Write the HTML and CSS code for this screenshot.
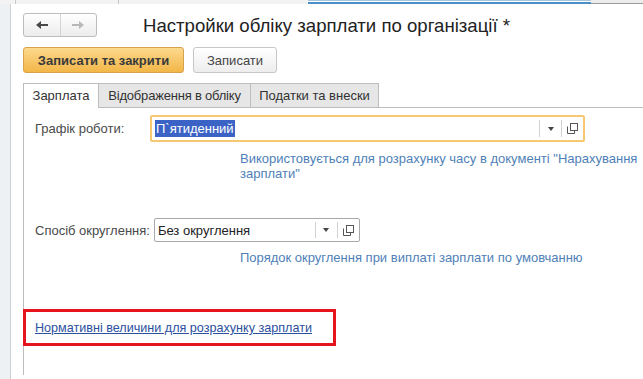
FILE: index.html
```html
<!DOCTYPE html>
<html lang="uk">
<head>
  <meta charset="UTF-8" />
  <meta name="viewport" content="width=device-width, initial-scale=1.0" />
  <title>Настройки обліку зарплати по організації</title>
  <link rel="stylesheet" href="styles.css">
</head>
<body>
  <div class="topstrip">
    <div class="seg seg-a"></div>
    <div class="seg seg-b"></div>
    <div class="seg seg-c"></div>
    <div class="seg seg-active"></div>
    <div class="seg seg-rest"></div>
  </div>

  <div class="page">
    <div class="sidebar"></div>

    <div class="main">
      <div class="title-row">
        <div class="nav">
          <button class="nav-btn">
            <svg width="14" height="10" viewBox="0 0 14 10"><path d="M1 5 L6 1 L6 4 L13 4 L13 6 L6 6 L6 9 Z" fill="#4a4a4a"/></svg>
          </button>
          <button class="nav-btn">
            <svg width="14" height="10" viewBox="0 0 14 10"><path d="M13 5 L8 1 L8 4 L1 4 L1 6 L8 6 L8 9 Z" fill="#b8b8b8"/></svg>
          </button>
        </div>
        <h1>Настройки обліку зарплати по організації *</h1>
      </div>

      <div class="actions">
        <button class="btn btn-main">Записати та закрити</button>
        <button class="btn">Записати</button>
      </div>

      <div class="tabs">
        <div class="tab active">Зарплата</div>
        <div class="tab">Відображення в обліку</div>
        <div class="tab">Податки та внески</div>
        <div class="tab-line"></div>
      </div>

      <div class="panel">
        <div class="field-row">
          <label class="label label-wide">Графік роботи:</label>
          <div class="input input-focus input-long">
            <div class="input-text"><span class="selected">П`ятиденний</span></div>
            <div class="input-btn">
              <svg width="6" height="4" viewBox="0 0 6 4"><path d="M0 0 L6 0 L3 4 Z" fill="#444"/></svg>
            </div>
            <div class="input-btn">
              <svg width="11" height="11" viewBox="0 0 11 11"><rect x="3.5" y="0.5" width="7" height="7" fill="none" stroke="#555"/><path d="M0.5 3.5 V10.5 H7.5 V8" fill="none" stroke="#555"/></svg>
            </div>
          </div>
        </div>
        <p class="hint hint-first">Використовується для розрахунку часу в документі "Нарахування<br>зарплати"</p>

        <div class="field-row field-second">
          <label class="label">Спосіб округлення:</label>
          <div class="input input-short">
            <div class="input-text">Без округлення</div>
            <div class="input-btn">
              <svg width="6" height="4" viewBox="0 0 6 4"><path d="M0 0 L6 0 L3 4 Z" fill="#444"/></svg>
            </div>
            <div class="input-btn">
              <svg width="11" height="11" viewBox="0 0 11 11"><rect x="3.5" y="0.5" width="7" height="7" fill="none" stroke="#555"/><path d="M0.5 3.5 V10.5 H7.5 V8" fill="none" stroke="#555"/></svg>
            </div>
          </div>
        </div>
        <p class="hint">Порядок округлення при виплаті зарплати по умовчанню</p>

        <div class="highlight">
          <a href="#" class="link">Нормативні величини для розрахунку зарплати</a>
        </div>
      </div>
    </div>
  </div>
</body>
</html>
```

FILE: styles.css
```css
body {
  font-family: "Liberation Sans", Arial, sans-serif;
  background-color: #ffffff;
  color: #333333;
  margin: 0;
  padding: 0;
  height: 379px;
  overflow: hidden;
}
.topstrip {
  display: flex;
  height: 4px;
  background-color: #f3f3f3;
}
.seg {
  height: 4px;
  box-sizing: border-box;
}
.seg-a {
  width: 16px;
  border-right: 1px solid #c8c8c8;
}
.seg-b {
  width: 103px;
  border-right: 1px solid #c8c8c8;
}
.seg-c {
  width: 189px;
}
.seg-active {
  width: 283px;
  background-color: #ffffff;
  border-top: 1px solid #a7c6df;
  border-bottom: 2px solid #4a8fc7;
}
.seg-rest {
  flex: 1;
  background-color: #ececec;
  border-bottom: 1px solid #9a9a9a;
}
.page {
  display: flex;
  height: 375px;
}
.sidebar {
  width: 10px;
  background-color: #eef1f4;
  border-right: 1px solid #cfcfcf;
}
.main {
  flex: 1;
  padding-left: 12px;
}
.title-row {
  display: flex;
  align-items: center;
  margin-top: 9px;
  height: 24px;
}
.nav {
  display: flex;
  width: 74px;
  height: 24px;
  box-sizing: border-box;
  border: 1px solid #bdbdbd;
  border-radius: 3px;
  background: linear-gradient(#ffffff, #ececec);
}
.nav-btn {
  flex: 1;
  border: none;
  background: none;
  padding: 0;
  display: flex;
  align-items: center;
  justify-content: center;
}
.nav-btn + .nav-btn {
  border-left: 1px solid #d4d4d4;
}
h1 {
  margin: 0 0 0 46px;
  font-size: 18.6px;
  font-weight: normal;
  color: #222222;
  line-height: 24px;
  padding-top: 2px;
}
.actions {
  display: flex;
  gap: 9px;
  margin-top: 10px;
}
.btn {
  height: 26px;
  box-sizing: border-box;
  padding: 0 13px;
  font-family: "Liberation Sans", Arial, sans-serif;
  font-size: 13px;
  color: #444444;
  border: 1px solid #c6c6c6;
  border-radius: 3px;
  background: linear-gradient(#ffffff, #ededed);
}
.btn-main {
  width: 161px;
  padding: 0;
  font-weight: bold;
  color: #3a3a3a;
  border-color: #d6a24a;
  background: linear-gradient(#fcd98d, #f2b648);
}
.tabs {
  display: flex;
  align-items: flex-end;
  margin-top: 10px;
  height: 25px;
}
.tab {
  height: 25px;
  box-sizing: border-box;
  padding: 0;
  text-align: center;
  white-space: nowrap;
  line-height: 24px;
  font-size: 13px;
  color: #333333;
  background-color: #e6e6e6;
  border: 1px solid #bdbdbd;
  border-left: none;
}
.tab.active {
  width: 76px;
  background-color: #ffffff;
  border-left: 1px solid #bdbdbd;
  border-bottom: none;
}
.tab:nth-child(2) {
  width: 152px;
  letter-spacing: -0.2px;
}
.tab:nth-child(3) {
  width: 128px;
}
.tab-line {
  flex: 1;
  border-bottom: 1px solid #bdbdbd;
}
.panel {
  border-left: 1px solid #bdbdbd;
  padding: 7px 0 0 11px;
  height: 260px;
}
.field-row {
  display: flex;
  align-items: center;
}
.label {
  font-size: 13px;
  color: #4a4a4a;
  margin-right: 4px;
}
.label-wide {
  width: 115px;
  margin-right: 0;
}
.input {
  display: flex;
  align-items: stretch;
  box-sizing: border-box;
  border: 1px solid #a9a9a9;
  border-radius: 2px;
  background-color: #ffffff;
  font-size: 13px;
  color: #222222;
}
.input-focus {
  border: 2px solid #f7c872;
}
.input-long {
  width: 435px;
  height: 27px;
}
.input-short {
  width: 206px;
  height: 24px;
}
.input-text {
  flex: 1;
  display: flex;
  align-items: center;
  padding-left: 3px;
}
.selected {
  background-color: #3b63c6;
  color: #ffffff;
  padding: 1px 1px;
}
.input-btn {
  width: 21px;
  display: flex;
  align-items: center;
  justify-content: center;
  border-left: 1px solid #d2d2d2;
  margin: 3px 0;
}
.hint {
  margin: 8px 0 0 205px;
  font-size: 13px;
  line-height: 15px;
  color: #4f7fb8;
}
.hint-first {
  margin-top: 9px;
}
.field-second {
  margin-top: 37px;
}
.hint {
  margin-bottom: 0;
}
.highlight {
  margin: 44px 0 0 -12px;
  width: 313px;
  height: 37px;
  box-sizing: border-box;
  border: 3px solid #e5141e;
  padding: 6px 0 0 9px;
}
.link {
  font-size: 12.6px;
  color: #2c4f9e;
  text-decoration: underline;
}
```
